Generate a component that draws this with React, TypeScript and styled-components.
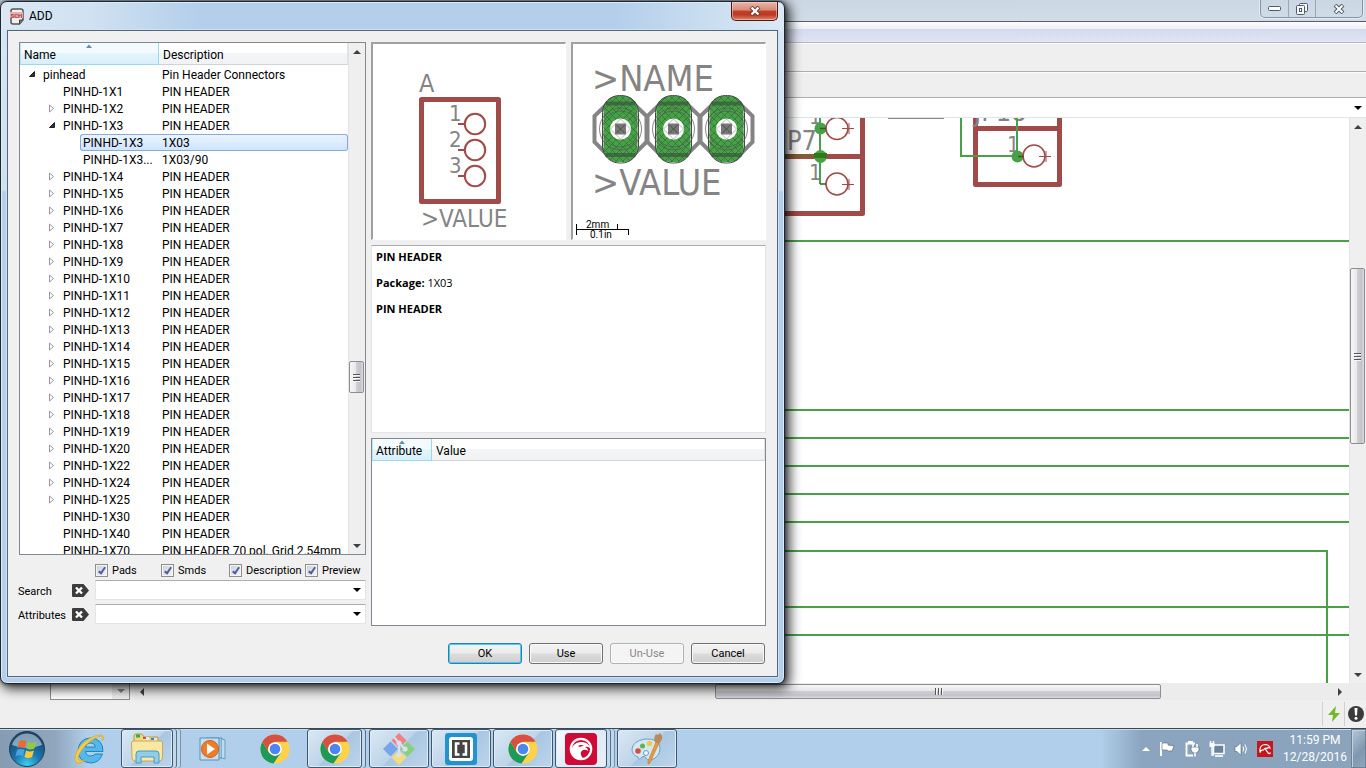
import React from "react";
import styled, { createGlobalStyle, css } from "styled-components";

const GlobalStyle = createGlobalStyle`
  *, *::before, *::after { box-sizing: border-box; }
  body { margin: 0; }
  button, input { font: inherit; color: inherit; }
`;

const ui = `Roboto, "Open Sans", "Liberation Sans", sans-serif`;
const drawingFont = `"DejaVu Sans Condensed", "DejaVu Sans", sans-serif`;

/* ---------- desktop and schematic window ---------- */

const Desktop = styled.div`
  position: relative;
  min-height: 100vh;
  display: flex;
  flex-direction: column;
  overflow: hidden;
  background: #efefef;
  font-family: ${ui};
  font-size: 12px;
  color: #000;
`;

const EditorTitle = styled.header`
  height: 22px;
  display: flex;
  justify-content: flex-end;
  padding-right: 3px;
  border-bottom: 1px solid #55606c;
  background: linear-gradient(#cbd7e3, #d0dce7);
`;

const WindowControls = styled.div`
  display: flex;
  height: 18px;
  border: 1px solid #8794a4;
  border-top: 0;
  border-radius: 0 0 5px 5px;
  box-shadow: 0 0 0 1px #e4ecf3;
`;

const ControlButton = styled.button<{ $wide?: boolean }>`
  width: ${(p) => (p.$wide ? 47 : 27)}px;
  padding: 0;
  border: 0;
  background: transparent;
  display: grid;
  place-items: center;
  & + & { border-left: 1px solid #9aa7b6; }
`;

const MenuStrip = styled.div`
  height: 21px;
  border-bottom: 1px solid #b4b7c6;
  background: linear-gradient(#fbfcfe 0, #eef1f8 7px, #d4daec 7px, #e0e4f5 100%);
`;

const ToolStrip = styled.div<{ $height: number }>`
  height: ${(p) => p.$height}px;
  border-top: 1px solid #fbfbfb;
  border-bottom: 1px solid #aeaeae;
  background: #efefef;
`;

const CommandLine = styled.div`
  height: 20px;
  display: flex;
  border-bottom: 1px solid #dbe5ea;
  background: #fff;
`;

const CommandInput = styled.input`
  flex: 1;
  min-width: 0;
  border: 0;
  padding: 0 4px;
  background: transparent;
`;

const DropButton = styled.button`
  width: 17px;
  padding: 0;
  border: 0;
  background: transparent;
  display: grid;
  place-items: center;
`;

const Workspace = styled.main`
  flex: 1;
  min-height: 0;
  display: flex;
`;

const SidePane = styled.div`
  width: 134px;
  display: flex;
  align-items: flex-end;
  padding-left: 50px;
`;

const SheetBox = styled.div`
  width: 80px;
  height: 18px;
  display: flex;
  justify-content: flex-end;
  border: 1px solid #8a8d92;
  background: #fff;
`;

const SheetArrow = styled.span`
  width: 17px;
  display: grid;
  place-items: center;
  background: #eee;
`;

const CanvasPane = styled.div`
  flex: 1;
  min-width: 0;
  display: flex;
  flex-direction: column;
`;

const CanvasRow = styled.div`
  flex: 1;
  min-height: 0;
  display: flex;
`;

const Drawing = styled.svg`
  flex: 1;
  display: block;
  min-width: 0;
  min-height: 0;
  width: 100%;
  background: #fff;
`;

const VTrack = styled.div<{ $before: number; $after: number }>`
  width: 17px;
  flex: none;
  display: grid;
  grid-template-rows: 17px ${(p) => p.$before}fr auto ${(p) => p.$after}fr 17px;
  justify-items: start;
  align-items: center;
  border-left: 1px solid #e4e4e4;
  background: #efefef;
`;

const VThumb = styled.div<{ $height: number }>`
  grid-row: 3;
  width: 15px;
  height: ${(p) => p.$height}px;
  display: grid;
  place-items: center;
  border: 1px solid #8f8f93;
  border-radius: 2px;
  background: linear-gradient(90deg, #f6f6f6, #e9e9ec 45%, #cfcfd4 50%, #c3c3c9 80%, #dcdce0);
`;

const TrackEnd = styled.span<{ $row?: number }>`
  grid-row: ${(p) => p.$row ?? "auto"};
  width: 16px;
  display: grid;
  place-items: center;
`;

const HTrack = styled.div`
  height: 17px;
  display: grid;
  grid-template-columns: 17px 564fr 446fr 171fr 17px 17px;
  align-items: center;
  background: #ececec;
`;

const HThumb = styled.div`
  height: 15px;
  display: grid;
  place-items: center;
  border: 1px solid #8f8f93;
  border-radius: 2px;
  background: linear-gradient(#f6f6f6, #e6e6e9 45%, #cdcdd2 50%, #c3c3c9 80%, #dcdce0);
`;

const StatusBar = styled.footer`
  height: 28px;
  display: flex;
  justify-content: flex-end;
  align-items: center;
  background: #efefef;
`;

const StatusCell = styled.span`
  width: 22px;
  height: 24px;
  display: grid;
  place-items: center;
  border-left: 1px solid #cfcfcf;
`;

/* ---------- ADD dialog ---------- */

const Dialog = styled.section`
  position: absolute;
  left: 0;
  top: 1px;
  width: 785px;
  padding: 0 6px 6px;
  border: 1px solid #1d2733;
  border-radius: 7px;
  background:
    linear-gradient(90deg, #dbe8f4 0, #d0e1f1 90px, transparent 200px) 0 0 / 100% 29px no-repeat,
    linear-gradient(270deg, #dce9f5 0, transparent 170px) 0 0 / 100% 29px no-repeat,
    linear-gradient(#d8e6f4 0, #cfe0f1 188px, transparent 190px) 0 0 / 6px 100% no-repeat,
    linear-gradient(#d8e6f4 0, #cfe0f1 188px, transparent 190px) 100% 0 / 6px 100% no-repeat,
    #b3cfea;
  box-shadow: inset 0 0 0 1px #dcebf8, 3px 3px 12px 2px rgba(0, 0, 0, 0.75), 0 0 4px rgba(0, 0, 0, 0.6);
`;

const DialogTitle = styled.header`
  height: 28px;
  display: flex;
  align-items: center;
  gap: 5px;
  padding-left: 3px;
`;

const TitleText = styled.h1`
  flex: 1;
  margin: 0;
  font: 400 12px ${ui};
`;

const CloseButton = styled.button`
  align-self: flex-start;
  width: 47px;
  height: 19px;
  padding: 0;
  display: grid;
  place-items: center;
  border: 1px solid #4a1a17;
  border-top: 0;
  border-radius: 0 0 5px 5px;
  background: linear-gradient(#e9b5a8, #d98a78 45%, #c2402a 50%, #b93a24 70%, #dc8467);
  box-shadow: inset 0 0 0 1px rgba(255, 220, 210, 0.5);
`;

const Client = styled.div`
  padding: 11px 11px 12px;
  border: 1px solid #56677b;
  background: #f0f0f0;
  box-shadow: 0 0 0 1px #cfe2f3;
`;

const Columns = styled.div`
  display: grid;
  grid-template-columns: 347px 1fr;
  gap: 5px;
`;

const TreeFrame = styled.div`
  height: 513px;
  display: flex;
  overflow: hidden;
  border: 1px solid #828790;
  background: #fff;
`;

const TreeView = styled.div`
  flex: 1;
  min-width: 0;
  height: 100%;
  overflow: hidden;
`;

const GridTable = styled.table`
  width: 100%;
  table-layout: fixed;
  border-collapse: separate;
  border-spacing: 0;
`;

const HeadCell = styled.th<{ $sorted?: boolean; $width?: number }>`
  position: relative;
  width: ${(p) => (p.$width ? `${p.$width}px` : "auto")};
  height: 22px;
  padding: 2px 4px 0;
  text-align: left;
  font-weight: 400;
  border-right: 1px solid #dfe2e6;
  border-bottom: 1px solid #d0d3d8;
  background: linear-gradient(#fff 45%, #f4f5f7 50%, #f1f2f4);
  ${(p) =>
    p.$sorted &&
    css`
      border-right-color: #96d9f0;
      border-bottom-color: #96d9f0;
      box-shadow: inset 1px 0 #b9e4f4;
      background: linear-gradient(#f4fbfe 45%, #e4f5fb 50%, #d8eff9);
    `}
`;

const SortMark = styled.svg`
  position: absolute;
  top: 1px;
  left: 50%;
  margin-left: -4px;
`;

const TreeBody = styled.tbody`
  &::before { content: ""; display: block; height: 1px; }
`;

const NameCell = styled.td<{ $depth: number }>`
  height: 17px;
  padding: 0 0 0 ${(p) => p.$depth * 20}px;
`;

const NameInner = styled.div<{ $selected: boolean }>`
  height: 17px;
  display: flex;
  align-items: flex-start;
  padding-top: 2px;
  line-height: 13px;
  white-space: nowrap;
  border: 1px solid transparent;
  border-right: 0;
  ${(p) =>
    p.$selected &&
    css`
      border-color: #84acdd;
      border-radius: 3px 0 0 3px;
      background: linear-gradient(#ebf4fe, #cfe4fe);
    `}
`;

const Twist = styled.span<{ $leaf: boolean }>`
  width: ${(p) => (p.$leaf ? 2 : 22)}px;
  height: 11px;
  padding-left: ${(p) => (p.$leaf ? 0 : 7)}px;
  display: flex;
  align-items: center;
`;

const DescCell = styled.td<{ $selected: boolean }>`
  height: 17px;
  padding: 2px 0 0 3px;
  line-height: 13px;
  white-space: nowrap;
  border: 1px solid transparent;
  border-left: 0;
  ${(p) =>
    p.$selected &&
    css`
      border-color: #84acdd;
      border-radius: 0 3px 3px 0;
      background: linear-gradient(#ebf4fe, #cfe4fe);
    `}
`;

const Options = styled.div`
  height: 25px;
  margin-left: 76px;
  display: grid;
  grid-template-columns: 66px 68px 76px 1fr;
  align-items: center;
  padding-top: 5px;
  font-size: 11px;
`;

const Option = styled.label`
  display: flex;
  align-items: center;
  gap: 4px;
  white-space: nowrap;
`;

const Tick = styled.input`
  appearance: none;
  position: relative;
  width: 13px;
  height: 13px;
  margin: 0;
  border: 1px solid #8e8f8f;
  background: linear-gradient(135deg, #cbcfd5, #f6f6f6);
  box-shadow: inset 0 0 0 1px #f4f4f4;
  &:checked::after {
    content: "";
    position: absolute;
    left: 4px;
    top: 1px;
    width: 4px;
    height: 8px;
    border: solid #4b5f9f;
    border-width: 0 2px 2px 0;
    transform: rotate(35deg);
  }
`;

const Filters = styled.div`
  display: grid;
  grid-template-columns: 53px 23px 1fr;
  grid-auto-rows: 20px;
  row-gap: 4px;
  align-items: center;
  font-size: 11px;
`;

const FilterLabel = styled.label`
  padding-top: 2px;
  margin-left: -1px;
`;

const ClearButton = styled.button`
  padding: 0;
  border: 0;
  background: transparent;
  display: flex;
`;

const ComboBox = styled.div`
  height: 20px;
  display: flex;
  border: 1px solid #e1e4e8;
  border-top-color: #abadb3;
  background: #fff;
`;

const RightSide = styled.div`
  display: grid;
  grid-template-rows: 198px 188px 188px;
  gap: 5px;
`;

const Previews = styled.div`
  display: grid;
  grid-template-columns: 1fr 1fr;
  gap: 5px;
`;

const Preview = styled.div`
  display: flex;
  border: solid #a0a0a0;
  border-width: 2px 1px 1px 2px;
  border-right-color: #fff;
  border-bottom-color: #fff;
`;

const Info = styled.div`
  padding: 2px 4px;
  border: 1px solid #e1e4e8;
  border-top-color: #abadb3;
  background: #fff;
  font: 11px/17px "Open Sans", ${ui};
`;

const InfoLine = styled.p`
  margin: 0 0 9px;
  line-height: 17px;
`;

const Attributes = styled.div`
  border: 1px solid #828790;
  background: #fff;
`;

const Actions = styled.div`
  display: flex;
  justify-content: flex-end;
  gap: 7px;
  margin-top: 17px;
  padding-right: 1px;
`;

const ActionButton = styled.button<{ $primary?: boolean }>`
  width: 74px;
  height: 21px;
  padding: 0;
  font-size: 11px;
  border: 1px solid ${(p) => (p.$primary ? "#2c7fa8" : "#707070")};
  border-radius: 3px;
  background: linear-gradient(#f3f3f3, #ebebeb 48%, #dcdcdc 52%, #cfcfcf);
  box-shadow: inset 0 0 0 1px ${(p) => (p.$primary ? "#48cdf2" : "#fafafa")};
  &:disabled {
    color: #888;
    border-color: #adb2b5;
    background: #f4f4f4;
  }
`;

/* ---------- taskbar ---------- */

const Taskbar = styled.nav`
  height: 40px;
  display: flex;
  align-items: stretch;
  border-top: 1px solid #35495e;
  box-shadow: inset 0 1px #c9dcec;
  background:
    linear-gradient(90deg, #869cb2 0, #8fa6bd 55px, transparent 88px),
    linear-gradient(270deg, #8ba3bb 0, #8ba5c0 225px, transparent 265px),
    #b1cfea;
`;

const TaskSlot = styled.button<{ $width: number; $gap?: number; $open?: boolean; $active?: boolean; $stack?: number }>`
  width: ${(p) => p.$width}px;
  margin-left: ${(p) => p.$gap ?? 0}px;
  margin-right: ${(p) => (p.$stack ?? 0) * 4}px;
  padding: 0;
  display: grid;
  place-items: center;
  border: 0;
  background: transparent;
  ${(p) =>
    p.$open &&
    css`
      border: 1px solid #3f5870;
      border-radius: 3px;
      background: linear-gradient(135deg, #dbe8f3, #bdd4e9 50%, #a9c6e2 52%, #bcd5eb);
      box-shadow: inset 0 0 0 1px #dfebf6
        ${p.$stack ? ", 3px 0 0 #c1d8ec, 4px 0 0 #55708b" : ""}
        ${(p.$stack ?? 0) > 1 ? ", 7px 0 0 #c1d8ec, 8px 0 0 #7893ac" : ""};
    `}
  ${(p) => p.$active && css`background: linear-gradient(135deg, #fafcfe, #dfeaf5 55%, #e8f1f9);`}
`;

const Tray = styled.div`
  flex: 1;
  display: flex;
  justify-content: flex-end;
  align-items: center;
  gap: 9px;
  color: #fff;
`;

const Clock = styled.time`
  width: 66px;
  text-align: center;
  font-size: 12px;
  line-height: 17px;
  white-space: nowrap;
`;

const ShowDesktop = styled.button`
  width: 15px;
  align-self: stretch;
  margin-left: -6px;
  border: 1px solid #6e8296;
  box-shadow: inset 1px 1px #c4d2df;
  padding: 0;
  background: linear-gradient(135deg, #b5c6d6, #7f97af 60%, #8fa6bd);
`;

/* ---------- glyphs ---------- */

function Arrow({ dir, color = "#404040" }: { dir: "up" | "down" | "left" | "right"; color?: string }) {
  const points = {
    up: "0,6 4,2 8,6",
    down: "0,2 8,2 4,6",
    left: "6,0 2,4 6,8",
    right: "2,0 6,4 2,8",
  }[dir];
  return (
    <svg width="8" height="8" aria-hidden="true">
      <polygon points={points} fill={color} />
    </svg>
  );
}

function Grip({ across }: { across?: boolean }) {
  return (
    <svg width="9" height="9" aria-hidden="true">
      <path
        d={across ? "M1.5 1v7M4.5 1v7M7.5 1v7" : "M1 1.5h7M1 4.5h7M1 7.5h7"}
        stroke="#55555b"
        strokeWidth="1"
      />
      <path
        d={across ? "M2.5 1v7M5.5 1v7M8.5 1v7" : "M1 2.5h7M1 5.5h7M1 8.5h7"}
        stroke="#f5f5f5"
        strokeWidth="1"
      />
    </svg>
  );
}

function Twisty({ open }: { open: boolean }) {
  return (
    <svg width="8" height="9" aria-hidden="true">
      {open ? (
        <path d="M6.500 1.500v5h-5z" fill="#333" stroke="#222" strokeLinejoin="round" />
      ) : (
        <path d="M1.500 1v7l4-3.500z" fill="#fff" stroke="#999" />
      )}
    </svg>
  );
}

function SortArrow() {
  return (
    <SortMark width="8" height="4" aria-hidden="true">
      <path d="M1 4L4 0.500L7 4z" fill="#5e8fae" />
    </SortMark>
  );
}

function ClearTag() {
  return (
    <svg width="17" height="13" aria-hidden="true">
      <path d="M1 0h10.500L17 6.500 11.500 13H1q-1 0-1-1V1q0-1 1-1z" fill="#3c3c3c" />
      <path d="M4 3.500l6 6M10 3.500l-6 6" stroke="#fff" strokeWidth="2.400" />
    </svg>
  );
}

/* ---------- drawings ---------- */

const red = "#a14a4a";
const green = "#48a148";
const grey = "#848484";

function Schematic() {
  const nets = [240.5, 409.5, 437.5, 465.5, 493.5, 521.5];
  return (
    <Drawing height="100%" aria-label="Schematic" fontFamily={drawingFont}>
      <g transform="translate(-134 -118)">
        <g fill="none" stroke={red} strokeWidth="5" strokeLinejoin="round">
          <path d="M600 213.500H862.500V100M600 156.500H862.500" />
          <path d="M975.500 100V184.500H1059.500V100M975.500 128.500H1059.500" />
        </g>
        <path d="M600 155.500H820" stroke="#78642e" strokeWidth="3" />
        <g fill={grey} fontSize="22">
          <text x="817" y="150" fontSize="27" textAnchor="end">JP7</text>
          <text x="809" y="124">1</text>
          <text x="809" y="180">1</text>
          <text x="1007" y="152">1</text>
          <text x="974" y="121" fontSize="27">JP18</text>
        </g>
        <path d="M888 118.500H944" stroke={grey} />
        <g fill="none" stroke={green} strokeWidth="2">
          <path d="M820 118V184M961 118V156H1017V118" />
          {nets.map((y) => (
            <path key={y} d={`M134 ${y + 0.5}H3000`} />
          ))}
          <path d="M134 551H1327V900M134 607H3000M134 635H3000" />
        </g>
        <g fill={green}>
          <circle cx="820.500" cy="128.500" r="6" />
          <circle cx="1017.500" cy="156.500" r="6" />
          <circle cx="820.500" cy="156.500" r="6.500" />
          <path d="M814 155.500h13" stroke="#2f7a16" strokeWidth="5" />
        </g>
        <g fill="none" stroke={red} strokeWidth="1.600">
          <circle cx="837" cy="128.500" r="11" />
          <circle cx="837" cy="184" r="11" />
          <circle cx="1034" cy="156" r="11" />
          <path d="M842 128.500h12M849 123v11M842 184.500h12M849 179v11M1039 156.500h12M1046 151v11" strokeWidth="1" />
          <path d="M820 128.500h6M820 184h6M1018 156.500h6" stroke="#3b5a1c" />
        </g>
      </g>
    </Drawing>
  );
}

function SymbolPreview() {
  return (
    <Drawing aria-label="Symbol" fontFamily={drawingFont}>
      <g transform="translate(-373 -44)">
        <rect x="421.500" y="99.500" width="77" height="102" fill="none" stroke={red} strokeWidth="5" strokeLinejoin="round" />
        <g fill={grey}>
          <text x="419" y="92" fontSize="25">A</text>
          <text x="421" y="227" fontSize="24">&gt;VALUE</text>
          {["1", "2", "3"].map((n, i) => (
            <text key={n} x="449" y={121 + i * 26} fontSize="22">{n}</text>
          ))}
        </g>
        <g fill="none" stroke={red} strokeWidth="2">
          {[124, 150, 176].map((y) => (
            <React.Fragment key={y}>
              <circle cx="475" cy={y} r="10.200" />
              <path d={`M458 ${y}h7`} />
            </React.Fragment>
          ))}
        </g>
      </g>
    </Drawing>
  );
}

function PackagePreview() {
  const pins = [620.5, 673.5, 726.5];
  return (
    <Drawing aria-label="Package" fontFamily={drawingFont}>
      <defs>
        <pattern id="hatch" width="7" height="7" patternUnits="userSpaceOnUse">
          <path d="M0 0L7 7M7 0L0 7" stroke="#256a2c" strokeWidth="0.600" />
        </pattern>
      </defs>
      <g transform="translate(-573 -44)">
        <g fill={grey} fontSize="36">
          <text x="592" y="91">&gt;NAME</text>
          <text x="592" y="195">&gt;VALUE</text>
        </g>
        {pins.map((x) => (
          <g key={x}>
            <path
              d={`M${x - 13} 103.500H${x + 13}L${x + 26} 116V142L${x + 13} 155H${x - 13}L${x - 26} 142V116Z`}
              fill="none"
              stroke={grey}
              strokeWidth="4"
            />
            <rect x={x - 17} y="96" width="34" height="66" rx="14" fill={green} />
            <rect x={x - 17} y="96" width="34" height="66" rx="14" fill="url(#hatch)" />
            <path d={`M${x - 15} 103.500h30M${x - 15} 155h30`} stroke="#3d5a3d" strokeOpacity="0.750" strokeWidth="4" />
            <rect x={x - 18} y="95.500" width="36" height="67.500" rx="17" fill="none" stroke="#444" />
            <g fill="none" stroke="#555" strokeWidth="0.700">
              <circle cx={x} cy="129" r="21" />
              <circle cx={x} cy="129" r="18" />
            </g>
            <circle cx={x} cy="129" r="10.500" fill="#fff" />
            <path d={`M${x - 10} 129l10 -10l10 10l-10 10z`} fill="none" stroke="#9a9a9a" strokeWidth="0.700" />
            <rect x={x - 5.5} y="123.500" width="11" height="11" fill="#777" />
            <path d={`M${x - 4} 133l8 -8M${x - 4} 125l8 8`} stroke="#4a4a4a" />
          </g>
        ))}
        <path d="M576.500 224V235M576 229.500H629M617.500 224V229M628.500 229V235" stroke="#000" fill="none" />
        <g fontSize="10" fontFamily={ui}>
          <text x="586" y="228">2mm</text>
          <text x="590" y="238">0.1in</text>
        </g>
      </g>
    </Drawing>
  );
}

function SchIcon() {
  return (
    <svg width="14" height="17" viewBox="0 0 14 17" aria-hidden="true">
      <path d="M3 1h8q2 0 2 2v9l-3.500 4H3q-2 0-2-2V3q0-2 2-2z" fill="#f0eeee" stroke="#555" strokeWidth="1.500" />
      <path d="M9.500 16v-4h3.500" fill="#777" stroke="#444" />
      <rect x="0" y="4" width="13" height="6" fill="#e3b3b3" />
      <text x="0.500" y="9.500" fontSize="6" fontWeight="700" fill="#b03a3a" fontFamily={ui}>SCH</text>
    </svg>
  );
}

function Chrome() {
  return (
    <svg width="30" height="30" viewBox="0 0 30 30" aria-hidden="true">
      <circle cx="15" cy="15" r="14.500" fill="#ffd24a" />
      <path d="M2.400 7.700A14.500 14.500 0 0 1 27.600 7.700H15L8.500 11z" fill="#d94f41" />
      <path d="M2.400 7.700A14.500 14.500 0 0 0 13.500 29.500L21 18.500 15 22 9 18.500z" fill="#1d9a57" />
      <path d="M2.400 7.700L9 18.500A7 7 0 0 1 15 8H27.600z" fill="#d94f41" />
      <circle cx="15" cy="15" r="6.800" fill="#fff" />
      <circle cx="15" cy="15" r="5.300" fill="#4a86f0" />
    </svg>
  );
}

function StartOrb() {
  return (
    <svg width="38" height="38" viewBox="0 0 38 38" aria-hidden="true">
      <defs>
        <radialGradient id="orb" cx="0.500" cy="0.950" r="0.850">
          <stop offset="0" stopColor="#3fd0f2" />
          <stop offset="0.450" stopColor="#1878b0" />
          <stop offset="1" stopColor="#1d4368" />
        </radialGradient>
      </defs>
      <circle cx="19" cy="19" r="17.500" fill="url(#orb)" stroke="#20405c" />
      <path d="M4 15A15.500 15.500 0 0 1 34 15Q19 21 4 15z" fill="#dbe9f3" opacity="0.550" />
      <path d="M11 11.500q4-2.500 7.500 0L17 18q-4-2-7.500 0z" fill="#ee6a2c" />
      <path d="M20 12q4 2 8.500 0L26.500 18.500q-4 2-8 0z" fill="#93c83f" />
      <path d="M9 20q4-2 7.500 0L15 26.500q-4-2.500-7.500 0z" fill="#48a3e2" />
      <path d="M18 20.500q4 2 8 0L24 27q-4 2-7.500 0z" fill="#fbc83a" />
    </svg>
  );
}

function Explorer() {
  return (
    <svg width="34" height="32" viewBox="0 0 34 32" aria-hidden="true">
      <path d="M4 3q0-2 2-2h6l2 3h14v8H4z" fill="#f1d980" stroke="#bb9a45" />
      <path d="M6 1.500h4v3H6z" fill="#35a956" />
      <path d="M13 4h6v3h-6z" fill="#e5e9ee" /><path d="M13 4h3v2h-3z" fill="#d8502e" />
      <path d="M21 5h6v3h-6z" fill="#e5e9ee" /><path d="M21 5h3v2h-3z" fill="#3684cd" />
      <path d="M1.500 10q0-2 2-2h27q2 0 2 2v14q0 4-3 4H5q-3 0-3-4z" fill="#f8e7a5" stroke="#c9aa55" />
      <path d="M6 30V21q0-3 3-3h17q3 0 3 3v9h-5v-6H11v6z" fill="#8fcdea" stroke="#4b9bc2" />
    </svg>
  );
}

function InternetExplorer() {
  return (
    <svg width="32" height="32" viewBox="0 0 32 32" aria-hidden="true">
      <path d="M30 18.500H12.500q1 4.500 5 4.500 3 0 4.500-2h7.500Q26.500 30 17.500 30 5.500 29 5 17.500 6 5.500 17.500 5 30 5.500 30 18.500zM12.500 14h10q-.5-4-5-4t-5 4z" fill="#54b9ea" stroke="#2285bd" />
      <path d="M31 6Q31 0 22 3 10 7 4 18 0 27 4 30 8 31 13 27 6 29 5 26 5 21 12 13 20 5 27 3q3 0 2 5z" fill="#f4cc4a" stroke="#d4a22a" strokeWidth="0.600" />
    </svg>
  );
}

function MediaPlayer() {
  return (
    <svg width="30" height="26" viewBox="0 0 30 26" aria-hidden="true">
      <path d="M7 2h16v20H7z" fill="#9ccae6" stroke="#5a92b8" />
      <path d="M23 3l3 1v19l-3-1" fill="#bfdcee" stroke="#6b9fc0" />
      <path d="M1 2h19v22H1z" fill="#c2e0f1" stroke="#5a92b8" />
      <circle cx="11" cy="13" r="8.500" fill="#f07c27" stroke="#d2601a" />
      <path d="M8 7.500v11L16 13z" fill="#fff" />
    </svg>
  );
}

function GitIcon() {
  return (
    <svg width="32" height="32" viewBox="0 0 32 32" aria-hidden="true">
      <g>
        <path d="M16 0l7.500 7.500L16 15 8.500 7.500z" fill="#f27f82" />
        <path d="M24.500 8.500L32 16l-7.500 7.500L17 16z" fill="#88cf7e" />
        <path d="M7.500 8.500L15 16l-7.500 7.500L0 16z" fill="#78a4ec" />
        <path d="M16 17l7.500 7.500L16 32l-7.500-7.500z" fill="#f6dc79" />
      </g>
      <path d="M11 4l5 6v12M16 10l6 6" stroke="#d5e3ef" strokeWidth="2" fill="none" />
      <g fill="#d5e3ef"><circle cx="16" cy="10" r="2.600" /><circle cx="22" cy="16" r="2.600" /><circle cx="16" cy="22" r="2.600" /></g>
    </svg>
  );
}

function BracketsIcon() {
  return (
    <svg width="32" height="32" viewBox="0 0 32 32" aria-hidden="true">
      <rect width="32" height="32" rx="3" fill="#2193d0" />
      <rect x="4" y="4" width="24" height="24" rx="3" fill="#fff" />
      <rect x="7" y="7" width="18" height="18" fill="#444" />
      <path d="M14.500 10.500h-3.500v11h3.500M17.500 10.500h3.500v11h-3.500" fill="none" stroke="#fff" strokeWidth="2.500" />
    </svg>
  );
}

function EagleIcon() {
  return (
    <svg width="32" height="32" viewBox="0 0 32 32" aria-hidden="true">
      <rect width="32" height="32" rx="4" fill="#cf0a35" />
      <circle cx="16" cy="16" r="10.200" fill="none" stroke="#fff" strokeWidth="2.200" />
      <path d="M6 19Q7 10 15 9q8-1 11 7-3-3-6-2 3 1 3 4-2-2-5-1-4 2-1 7l1 2Q8 27 6 19z" fill="#fff" />
      <path d="M13 13q3-2 6 0-3 0-4 1z" fill="#cf0a35" />
    </svg>
  );
}

function PaintIcon() {
  return (
    <svg width="32" height="32" viewBox="0 0 32 32" aria-hidden="true">
      <path d="M14 6q14-1 15 9 0 9-9 12-4 1-5-2t-4-1q-3 4-4 0-6-2-6-8Q2 8 14 6z" fill="#d3e8f5" stroke="#6da0c4" />
      <circle cx="7" cy="18" r="2.800" fill="#d84c3b" />
      <circle cx="11.500" cy="13" r="2.500" fill="#5cb552" />
      <circle cx="18.500" cy="10.500" r="2.800" fill="#f3c94b" />
      <circle cx="15" cy="20" r="2.500" fill="#eff7fb" stroke="#5f9cc4" />
      <path d="M25 9l3 1-9 20-2 1 0-3z" fill="#eb9b3e" stroke="#c47422" strokeWidth="0.600" />
      <path d="M24 9.500Q22 5 25 1q2 2 4-1 3 3 2 6-1 3-3 4.500z" fill="#b98a5d" />
    </svg>
  );
}

function FlagIcon() {
  return (
    <svg width="16" height="16" viewBox="0 0 16 16" aria-hidden="true">
      <path d="M2 1v14" stroke="#fff" strokeWidth="2" />
      <path d="M3 2h6v2l6 1-2 5-4 0-1-1H3z" fill="#fff" stroke="#506274" strokeWidth="0.600" />
    </svg>
  );
}

function PowerIcon() {
  return (
    <svg width="16" height="16" viewBox="0 0 16 16" fill="none" aria-hidden="true">
      <path d="M11 2.500H2.500v12H9M4 1h5" stroke="#fff" strokeWidth="1.800" />
      <path d="M7 6h8v3l-2 3h-4L7 9z" fill="#fff" stroke="#44566a" strokeWidth="0.600" />
      <path d="M9 3v3M13 3v3M11 12v3.500" stroke="#fff" strokeWidth="1.600" />
    </svg>
  );
}

function NetworkIcon() {
  return (
    <svg width="16" height="16" viewBox="0 0 16 16" fill="none" aria-hidden="true">
      <rect x="4.500" y="4" width="10.500" height="8.500" fill="#6b8298" stroke="#fff" strokeWidth="1.500" />
      <path d="M6 15h8" stroke="#fff" strokeWidth="1.600" />
      <path d="M0.500 2h5v4h-5z" fill="#fff" />
      <path d="M1.500 0v2M4.500 0v2M3 6v8h2" stroke="#fff" strokeWidth="1.400" />
    </svg>
  );
}

function SpeakerIcon() {
  return (
    <svg width="14" height="16" viewBox="0 0 14 16" fill="none" aria-hidden="true">
      <path d="M1 5.500h2L7 1.500v13l-4-4H1z" fill="#fff" stroke="#506274" strokeWidth="0.600" />
      <path d="M9 5.500q1.500 2.500 0 5M11 3.500q3 4.500 0 9" stroke="#fff" />
    </svg>
  );
}

function UmbrellaIcon() {
  return (
    <svg width="16" height="16" viewBox="0 0 16 16" fill="none" aria-hidden="true">
      <rect width="16" height="16" fill="#c5161d" />
      <path d="M3 11.500Q2 4 8 3.500q4 0 5 3.500-2-1-3 .5Q8 6.500 6.500 9 4 8.500 3 11.500z" stroke="#fff" strokeWidth="1.200" />
      <path d="M8 7.500l3.500 5q1.500.5 2-1" stroke="#fff" strokeWidth="1.300" />
    </svg>
  );
}

/* ---------- data ---------- */

type Node = { name: string; desc: string; depth: number; open?: boolean; leaf?: boolean; selected?: boolean };

const device = (n: number, leaf = false, desc = "PIN HEADER"): Node => ({
  name: `PINHD-1X${n}`,
  desc,
  depth: 1,
  leaf,
});

const nodes: Node[] = [
  { name: "pinhead", desc: "Pin Header Connectors", depth: 0, open: true },
  device(1, true),
  device(2),
  { ...device(3), open: true },
  { name: "PINHD-1X3", desc: "1X03", depth: 3, leaf: true, selected: true },
  { name: "PINHD-1X3...", desc: "1X03/90", depth: 3, leaf: true },
  ...[4, 5, 6, 7, 8, 9, 10, 11, 12, 13, 14, 15, 16, 17, 18, 19, 20, 22, 24, 25].map((n) => device(n)),
  device(30, true),
  device(40, true),
  device(70, true, "PIN HEADER 70 pol. Grid 2.54mm"),
];

function TreeRow({ node }: { node: Node }) {
  const nested = node.depth === 3;
  const depth = node.leaf && !nested ? 2 : node.depth;
  return (
    <tr>
      <NameCell $depth={depth}>
        <NameInner $selected={!!node.selected}>
          <Twist $leaf={!!node.leaf}>{!node.leaf && <Twisty open={!!node.open} />}</Twist>
          {node.name}
        </NameInner>
      </NameCell>
      <DescCell $selected={!!node.selected}>{node.desc}</DescCell>
    </tr>
  );
}

function Filter({ id, label }: { id: string; label: string }) {
  return (
    <>
      <FilterLabel htmlFor={id}>{label}</FilterLabel>
      <ClearButton aria-label={`Clear ${label}`}><ClearTag /></ClearButton>
      <ComboBox>
        <CommandInput id={id} />
        <DropButton aria-label={`${label} history`}><Arrow dir="down" color="#000" /></DropButton>
      </ComboBox>
    </>
  );
}

function AddDialog() {
  return (
    <Dialog role="dialog" aria-label="ADD">
      <DialogTitle>
        <SchIcon />
        <TitleText>ADD</TitleText>
        <CloseButton aria-label="Close">
          <svg width="12" height="10" aria-hidden="true">
            <path d="M2 1l8 8M10 1l-8 8" stroke="#6b3430" strokeWidth="4" />
            <path d="M2.500 1.500l7 7M9.500 1.500l-7 7" stroke="#fff" strokeWidth="2.400" />
          </svg>
        </CloseButton>
      </DialogTitle>
      <Client>
        <Columns>
          <div>
            <TreeFrame>
              <TreeView>
                <GridTable>
                  <thead>
                    <tr>
                      <HeadCell $sorted $width={139}>Name<SortArrow /></HeadCell>
                      <HeadCell>Description</HeadCell>
                    </tr>
                  </thead>
                  <TreeBody>
                    {nodes.map((n, i) => <TreeRow key={i} node={n} />)}
                  </TreeBody>
                </GridTable>
              </TreeView>
              <VTrack $before={302} $after={144}>
                <TrackEnd $row={1}><Arrow dir="up" /></TrackEnd>
                <VThumb $height={32}><Grip /></VThumb>
                <TrackEnd $row={5}><Arrow dir="down" /></TrackEnd>
              </VTrack>
            </TreeFrame>
            <Options>
              {["Pads", "Smds", "Description", "Preview"].map((o) => (
                <Option key={o}><Tick type="checkbox" defaultChecked />{o}</Option>
              ))}
            </Options>
            <Filters>
              <Filter id="search" label="Search" />
              <Filter id="attributes" label="Attributes" />
            </Filters>
          </div>
          <RightSide>
            <Previews>
              <Preview><SymbolPreview /></Preview>
              <Preview><PackagePreview /></Preview>
            </Previews>
            <Info>
              <InfoLine><b>PIN HEADER</b></InfoLine>
              <InfoLine><b>Package:</b> 1X03</InfoLine>
              <InfoLine><b>PIN HEADER</b></InfoLine>
            </Info>
            <Attributes>
              <GridTable>
                <thead>
                  <tr>
                    <HeadCell $sorted $width={60}>Attribute<SortArrow /></HeadCell>
                    <HeadCell>Value</HeadCell>
                  </tr>
                </thead>
              </GridTable>
            </Attributes>
          </RightSide>
        </Columns>
        <Actions>
          <ActionButton $primary>OK</ActionButton>
          <ActionButton>Use</ActionButton>
          <ActionButton disabled>Un-Use</ActionButton>
          <ActionButton>Cancel</ActionButton>
        </Actions>
      </Client>
    </Dialog>
  );
}

export default function App() {
  return (
    <Desktop>
      <GlobalStyle />
      <EditorTitle>
        <WindowControls>
          <ControlButton aria-label="Minimize">
            <svg width="13" height="6"><rect x="0.500" y="0.500" width="12" height="4" rx="1" fill="#fff" stroke="#4f5b69" /></svg>
          </ControlButton>
          <ControlButton aria-label="Restore">
            <svg width="12" height="12" fill="#f4f7fa" stroke="#4f5b69">
              <rect x="3.500" y="0.500" width="8" height="8" rx="1" />
              <rect x="0.500" y="2.500" width="8" height="9" rx="1" />
              <rect x="3.500" y="5.500" width="2" height="3" />
            </svg>
          </ControlButton>
          <ControlButton $wide aria-label="Close window">
            <svg width="12" height="10">
              <path d="M2 1l8 8M10 1l-8 8" stroke="#4f5b69" strokeWidth="4" />
              <path d="M2.500 1.500l7 7M9.500 1.500l-7 7" stroke="#fff" strokeWidth="2" />
            </svg>
          </ControlButton>
        </WindowControls>
      </EditorTitle>
      <MenuStrip />
      <ToolStrip $height={29} />
      <ToolStrip $height={26} />
      <CommandLine>
        <CommandInput aria-label="Command" />
        <DropButton aria-label="Command history"><Arrow dir="down" color="#000" /></DropButton>
      </CommandLine>
      <Workspace>
        <SidePane>
          <SheetBox><SheetArrow><Arrow dir="down" color="#888" /></SheetArrow></SheetBox>
        </SidePane>
        <CanvasPane>
          <CanvasRow>
            <Schematic />
            <VTrack $before={133} $after={222}>
              <TrackEnd $row={1}><Arrow dir="up" /></TrackEnd>
              <VThumb $height={176}><Grip /></VThumb>
              <TrackEnd $row={5}><Arrow dir="down" /></TrackEnd>
            </VTrack>
          </CanvasRow>
          <HTrack>
            <TrackEnd><Arrow dir="left" /></TrackEnd>
            <span />
            <HThumb><Grip across /></HThumb>
            <span />
            <TrackEnd><Arrow dir="right" /></TrackEnd>
          </HTrack>
        </CanvasPane>
      </Workspace>
      <StatusBar>
        <StatusCell>
          <svg width="14" height="16"><path d="M9 0L1 9h5l-1 7 8-9H8z" fill="#77b82a" /></svg>
        </StatusCell>
        <StatusCell>
          <svg width="16" height="16">
            <circle cx="8" cy="8" r="8" fill="#3b3b3b" />
            <path d="M6.500 2h3L9 9.500H7z" fill="#fff" />
            <circle cx="8" cy="12.300" r="1.500" fill="#fff" />
          </svg>
        </StatusCell>
      </StatusBar>
      <Taskbar>
        <TaskSlot $width={54} aria-label="Start"><StartOrb /></TaskSlot>
        <TaskSlot $width={62} $gap={4} aria-label="Internet Explorer"><InternetExplorer /></TaskSlot>
        <TaskSlot $width={52} $gap={1} $open $stack={2} aria-label="Explorer"><Explorer /></TaskSlot>
        <TaskSlot $width={66} aria-label="Media Player"><MediaPlayer /></TaskSlot>
        <TaskSlot $width={56} aria-label="Chrome"><Chrome /></TaskSlot>
        <TaskSlot $width={55} $gap={4} $open $stack={1} aria-label="Chrome windows"><Chrome /></TaskSlot>
        <TaskSlot $width={60} $gap={3} $open aria-label="Git"><GitIcon /></TaskSlot>
        <TaskSlot $width={60} $gap={2} $open aria-label="Brackets"><BracketsIcon /></TaskSlot>
        <TaskSlot $width={60} $gap={2} $open aria-label="Chrome profile"><Chrome /></TaskSlot>
        <TaskSlot $width={52} $gap={2} $open $active $stack={2} aria-label="EAGLE"><EagleIcon /></TaskSlot>
        <TaskSlot $width={60} $gap={2} $open aria-label="Paint"><PaintIcon /></TaskSlot>
        <Tray>
          <Arrow dir="up" color="#fff" />
          <FlagIcon />
          <PowerIcon />
          <NetworkIcon />
          <SpeakerIcon />
          <UmbrellaIcon />
          <Clock>11:59 PM<br />12/28/2016</Clock>
          <ShowDesktop aria-label="Show desktop" />
        </Tray>
      </Taskbar>
      <AddDialog />
    </Desktop>
  );
}
